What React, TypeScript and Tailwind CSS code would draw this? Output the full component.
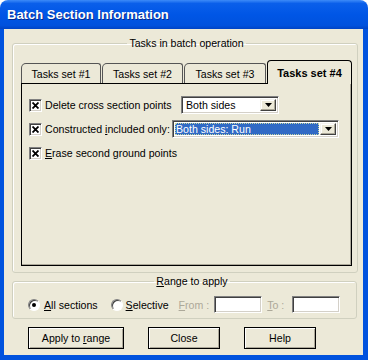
import React from "react";

const font = "font-['Liberation_Sans',Arial,sans-serif]";
const sunken =
  "border border-t-[#808080] border-l-[#808080] border-b-white border-r-white shadow-[inset_1px_1px_0_#404040,inset_-1px_-1px_0_#D4D0C8]";
const raised =
  "border border-t-[#F4F3EE] border-l-[#F4F3EE] border-b-[#404040] border-r-[#404040] shadow-[inset_-1px_-1px_0_#ACA899,inset_1px_1px_0_#fff]";

function Check({ label }: { label: React.ReactNode }) {
  return (
    <div className="flex items-center h-[18px]">
      <div className={`w-[13px] h-[13px] shrink-0 bg-white flex items-center justify-center ${sunken}`}>
        <svg width="7" height="7" viewBox="0 0 7 7">
          <path d="M0.5 0.5 L6.5 6.5 M6.5 0.5 L0.5 6.5" stroke="#000" strokeWidth="1.8" />
        </svg>
      </div>
      <span className="ml-[3px]">{label}</span>
    </div>
  );
}

function Arrow() {
  return (
    <div className={`w-[16px] h-full bg-[#ECE9D8] flex items-center justify-center ${raised}`}>
      <svg width="7" height="4" viewBox="0 0 7 4">
        <path d="M0 0 H7 L3.5 4 Z" fill="#000" />
      </svg>
    </div>
  );
}

function Combo({ value, width, selected }: { value: string; width: string; selected?: boolean }) {
  return (
    <div className={`${width} h-[18px] shrink-0 bg-white flex items-stretch p-[2px] ${sunken}`}>
      <div className="flex-1 flex items-center pr-[1px]">
        {selected ? (
          <div className="w-full h-full bg-[#316AC5] text-white flex items-center pl-[1px] outline-1 outline-dotted outline-[#C9D7A0] -outline-offset-1">
            {value}
          </div>
        ) : (
          <span className="pl-[2px]">{value}</span>
        )}
      </div>
      <Arrow />
    </div>
  );
}

function Tab({ label, active, w }: { label: string; active?: boolean; w: string }) {
  return active ? (
    <div
      className={`${w} h-[24px] -mb-px relative z-10 bg-[#ECE9D8] border border-b-0 border-black rounded-t-[4px] flex items-center justify-center font-bold text-[11px]`}
    >
      {label}
    </div>
  ) : (
    <div
      className={`${w} h-[20px] bg-[#ECE9D8] border border-b-0 border-[#555] rounded-tl-[5px] rounded-tr-[3px] flex items-center justify-center`}
    >
      {label}
    </div>
  );
}

function Radio({ checked }: { checked?: boolean }) {
  return (
    <div className="w-[12px] h-[12px] shrink-0 rounded-full bg-white border border-t-[#808080] border-l-[#808080] border-b-white border-r-white shadow-[inset_1px_1px_0_#404040] flex items-center justify-center">
      {checked && <div className="w-[4px] h-[4px] rounded-full bg-black" />}
    </div>
  );
}

function Button({ children, w }: { children: React.ReactNode; w: string }) {
  return (
    <div
      className={`${w} h-[22px] border border-black bg-[#ECE9D8] shadow-[inset_1px_1px_0_#fff,inset_-1px_-1px_0_#ACA899] flex items-center justify-center`}
    >
      {children}
    </div>
  );
}

export default function App() {
  return (
    <div className={`w-[368px] h-[360px] bg-white text-[10.6px] leading-[14px] text-black whitespace-nowrap ${font}`}>
      <div className="w-[368px] h-[360px] rounded-t-[8px] overflow-hidden flex flex-col">
        <div className="h-[29px] shrink-0 bg-[linear-gradient(to_bottom,#3D8BF8_0%,#0A5FEA_12%,#0056E6_50%,#0051DD_88%,#0043C4_100%)] flex items-center pl-[7px]">
          <span className="text-white font-bold text-[13px] [text-shadow:1px_1px_0_#0A2A8A]">
            Batch Section Information
          </span>
        </div>
        <div className="h-[331px] bg-[#ECE9D8] border-l-4 border-r-5 border-b-5 border-[#0052DE] flex flex-col pl-[8px] pr-[6px] pt-[7px]">
          <fieldset className="h-[237px] border border-[#D0D0BF] rounded-[3px] pl-[8px] pr-[5px] pt-[10px] pb-[6px] shadow-[inset_1px_1px_0_#fff]">
            <legend className="mx-auto px-[2px] h-[14px]">Tasks in batch operation</legend>
            <div className="flex items-end gap-[1px] h-[23px]">
              <Tab label="Tasks set #1" w="w-[80px]" />
              <Tab label="Tasks set #2" w="w-[81px]" />
              <Tab label="Tasks set #3" w="w-[82px]" />
              <Tab label="Tasks set #4" w="w-[85px]" active />
            </div>
            <div className="h-[183px] border border-black shadow-[inset_-1px_-1px_0_#ACA899] pl-[7px] pt-[12px] flex flex-col gap-[6px]">
              <div className="flex items-center">
                <div className="w-[152px] shrink-0">
                  <Check label="Delete cross section points" />
                </div>
                <Combo value="Both sides" width="w-[98px]" />
              </div>
              <div className="flex items-center">
                <div className="w-[143px] shrink-0">
                  <Check
                    label={
                      <>
                        Constructed <u>i</u>ncluded only:
                      </>
                    }
                  />
                </div>
                <Combo value="Both sides: Run" width="w-[167px]" selected />
              </div>
              <Check
                label={
                  <>
                    <u>E</u>rase second ground points
                  </>
                }
              />
            </div>
          </fieldset>
          <fieldset className="mt-[1px] h-[45px] border border-[#D0D0BF] rounded-[3px] pl-[15px] pt-[8px] shadow-[inset_1px_1px_0_#fff]">
            <legend className="mx-auto px-[2px] h-[14px]">
              <u>R</u>ange to apply
            </legend>
            <div className="flex items-center h-[17px]">
              <Radio checked />
              <span className="ml-[4px]">
                <u>A</u>ll sections
              </span>
              <div className="ml-[13px]">
                <Radio />
              </div>
              <span className="ml-[3px]">
                <u>S</u>elective
              </span>
              <span className="ml-[10px] text-[#ACA899]">
                <u>F</u>rom :
              </span>
              <div className={`ml-[5px] w-[48px] h-[17px] bg-white ${sunken}`} />
              <span className="ml-[5px] text-[#ACA899]">
                <u>T</u>o :
              </span>
              <div className={`ml-[8px] w-[48px] h-[17px] bg-white ${sunken}`} />
            </div>
          </fieldset>
          <div className="mt-[8px] pl-[16px] flex gap-[24px]">
            <Button w="w-[96px]">
              <span>
                Apply to <u>r</u>ange
              </span>
            </Button>
            <Button w="w-[72px]">Close</Button>
            <Button w="w-[72px]">Help</Button>
          </div>
        </div>
      </div>
    </div>
  );
}
